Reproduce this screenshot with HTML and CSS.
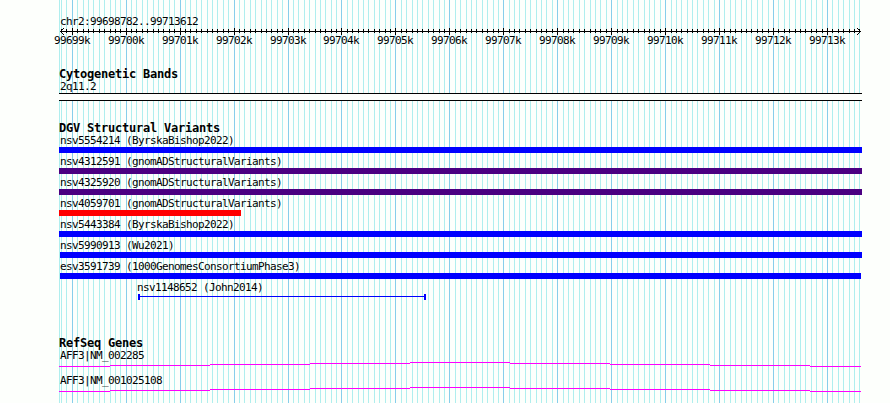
FILE: index.html
```
<!DOCTYPE html>
<html lang="en">
<head>
    <meta charset="UTF-8">
    <meta name="viewport" content="width=device-width, initial-scale=1.0">
    <title>chr2:99698782..99713612</title>
    <link rel="stylesheet" href="styles.css">
</head>
<body>
    <svg id="grid" class="grid" width="890" height="403"></svg>

    <main class="panel">
        <div class="label region">chr2:99698782..99713612</div>
        <svg id="ruler" class="ruler" width="890" height="24"></svg>

        <section class="track cytobands">
            <h2>Cytogenetic Bands</h2>
            <div class="label">2q11.2</div>
            <div class="band"></div>
        </section>

        <section class="track variants">
            <h2>DGV Structural Variants</h2>
            <div class="feature">
                <div class="label">nsv5554214 (ByrskaBishop2022)</div>
                <div class="bar gain"></div>
            </div>
            <div class="feature">
                <div class="label">nsv4312591 (gnomADStructuralVariants)</div>
                <div class="bar complex"></div>
            </div>
            <div class="feature">
                <div class="label">nsv4325920 (gnomADStructuralVariants)</div>
                <div class="bar complex"></div>
            </div>
            <div class="feature">
                <div class="label">nsv4059701 (gnomADStructuralVariants)</div>
                <div class="bar loss"></div>
            </div>
            <div class="feature">
                <div class="label">nsv5443384 (ByrskaBishop2022)</div>
                <div class="bar gain"></div>
            </div>
            <div class="feature">
                <div class="label">nsv5990913 (Wu2021)</div>
                <div class="bar gain inset"></div>
            </div>
            <div class="feature">
                <div class="label">esv3591739 (1000GenomesConsortiumPhase3)</div>
                <div class="bar gain inset short"></div>
            </div>
            <div class="feature partial">
                <div class="label">nsv1148652 (John2014)</div>
                <div class="span"></div>
            </div>
        </section>

        <section class="track genes">
            <h2>RefSeq Genes</h2>
            <div class="gene">
                <div class="label">AFF3|NM_002285</div>
                <svg class="intron" width="803" height="5"></svg>
            </div>
            <div class="gene">
                <div class="label">AFF3|NM_001025108</div>
                <svg class="intron" width="803" height="5"></svg>
            </div>
        </section>
    </main>

    <script src="script.js"></script>
</body>
</html>
```

FILE: styles.css
```
body {
    margin: 0;
    width: 890px;
    height: 403px;
    overflow: hidden;
    position: relative;
    background-color: #fdfffc;
    color: #000000;
    font-family: "DejaVu Sans Mono", monospace;
}

svg {
    display: block;
    shape-rendering: crispEdges;
}

/* Grid lines lie behind all tracks */
.grid {
    position: absolute;
    top: 0;
    left: 0;
    z-index: -1;
}

.grid .minor { fill: #afeeee; }
.grid .major { fill: #87ceeb; }

.panel {
    padding-top: 15px;
}

.label {
    height: 13px;
    line-height: 13px;
    padding-left: 1px;
    font-size: 11px;
    letter-spacing: -0.622px;
    white-space: pre;
}

.region {
    height: 12px;
    margin-left: 59px;
}

.ruler text {
    font-size: 11px;
    letter-spacing: -0.622px;
}

.track {
    width: 803px;
    margin-left: 59px;
}

h2 {
    margin: 0;
    height: 12px;
    line-height: 12px;
    font-size: 12px;
    font-weight: bold;
    letter-spacing: -0.224px;
    white-space: pre;
}

/* Cytogenetic bands */
.cytobands {
    padding-top: 17px;
}

.band {
    height: 6px;
    border-top: 1px solid #000000;
    border-bottom: 1px solid #000000;
    background-color: #fdfffc;
}

/* Structural variants */
.variants {
    padding-top: 21px;
}

.feature {
    height: 21px;
}

.bar {
    height: 6px;
}

.gain { background-color: #0000ff; }
.complex { background-color: #4b0082; }
.loss { background-color: #ff0000; width: 182px; }
.inset { margin-left: 1px; }
.short { margin-right: 1px; }

.partial {
    margin-left: 77px;
}

.span {
    box-sizing: border-box;
    width: 288px;
    height: 6px;
    margin-left: 2px;
    border: solid #0000ff;
    border-width: 0 2px;
    background: linear-gradient(#0000ff, #0000ff) 0 2px / 100% 1px no-repeat;
}

/* Genes */
.genes {
    padding-top: 35px;
}

.gene {
    height: 25px;
}

.intron rect { fill: #ff00ff; }
```

FILE: script.js
```
const svgNS = 'http://www.w3.org/2000/svg';
const regionStart = 99698782;
const regionEnd = 99713612;
const pxPerBase = 0.05394;

function addShape(parent, tag, attrs) {
    const el = document.createElementNS(svgNS, tag);
    for (const key in attrs) {
        el.setAttribute(key, attrs[key]);
    }
    parent.appendChild(el);
    return el;
}

function addRect(parent, x, y, width, height, className) {
    addShape(parent, 'rect', { x, y, width, height, class: className || '' });
}

function toX(base) {
    return Math.floor(72.27 + (base - 99699000) * pxPerBase);
}

const grid = document.getElementById('grid');
const ruler = document.getElementById('ruler');

// Axis line with an arrow head at both ends
addRect(ruler, 60, 4, 801, 1);
for (let i = 1; i <= 3; i++) {
    addRect(ruler, 60 + i, 4 - i, 1, 1);
    addRect(ruler, 60 + i, 4 + i, 1, 1);
    addRect(ruler, 860 - i, 4 - i, 1, 1);
    addRect(ruler, 860 - i, 4 + i, 1, 1);
}

// One line every 100 bases, a stronger one with a label every 1000
addRect(grid, 59, 0, 1, 403, 'minor');
for (let base = Math.ceil(regionStart / 100) * 100; base <= regionEnd; base += 100) {
    const x = toX(base);
    const major = base % 1000 === 0;
    addRect(grid, x, 0, 1, 403, major ? 'major' : 'minor');
    if (major) {
        addRect(ruler, x, 1, 1, 7);
        addShape(ruler, 'text', { x: x - 18, y: 17 }).textContent = base / 1000 + 'k';
    } else {
        addRect(ruler, x, 2, 1, 4);
    }
}

// Intron lines rise and fall in one pixel steps
const steps = [0, 51, 151, 251, 351, 451, 551, 651, 751, 802];
const levels = [4, 3, 2, 1, 0, 1, 2, 3, 4];
document.querySelectorAll('.intron').forEach(function (svg) {
    levels.forEach(function (y, i) {
        addRect(svg, steps[i], y, steps[i + 1] - steps[i], 1);
    });
});
```
